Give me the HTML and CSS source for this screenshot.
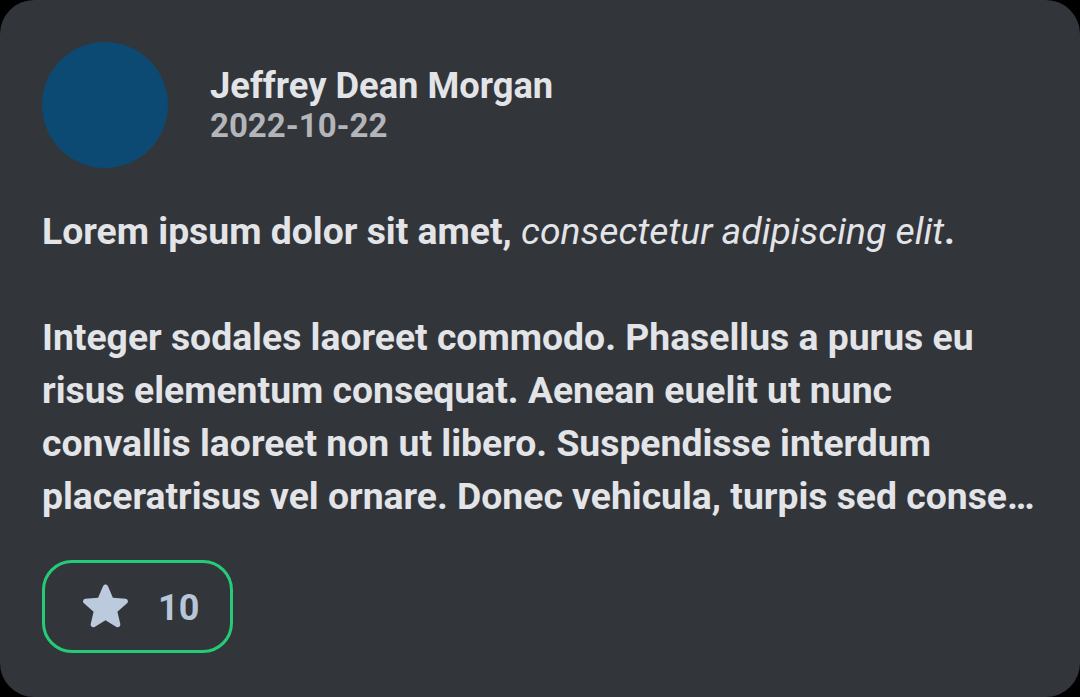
FILE: index.html
```html
<!DOCTYPE html>
<html>
<head>
<meta charset="utf-8">
<link rel="stylesheet" href="styles.css">
</head>
<body>
<div class="card">
  <div class="header">
    <div class="avatar"></div>
    <div class="meta">
      <div class="name">Jeffrey Dean Morgan</div>
      <div class="date">2022-10-22</div>
    </div>
  </div>
  <div class="body">
    <p class="para"><b>Lorem ipsum dolor sit amet,</b> <i>consectetur adipiscing elit</i>.</p>
    <p class="para">Integer sodales laoreet commodo. Phasellus a purus eu risus elementum consequat. Aenean euelit ut nunc convallis laoreet non ut libero. Suspendisse interdum</p>
    <p class="para last">placeratrisus vel ornare. Donec vehicula, turpis sed consectetur ullamcorper, ante nunc egestas quam.</p>
  </div>
  <div class="actions">
    <button class="like">
      <svg class="star" viewBox="0 0 24 24"><path fill="currentColor" d="M12 17.27l4.15 2.51c.76.46 1.69-.22 1.49-1.08l-1.1-4.72 3.67-3.18c.67-.58.31-1.68-.57-1.75l-4.83-.41-1.89-4.46c-.34-.81-1.5-.81-1.84 0L9.19 8.63l-4.83.41c-.88.07-1.24 1.17-.57 1.75l3.67 3.18-1.1 4.72c-.2.86.73 1.54 1.49 1.08L12 17.27z"/></svg>
      <span class="count">10</span>
    </button>
  </div>
</div>
</body>
</html>
```
FILE: styles.css
```css
html, body {
  margin: 0;
  padding: 0;
  background: #000;
}
body {
  width: 1080px;
  height: 697px;
  font-family: Roboto, "Noto Sans", sans-serif;
}
.card {
  box-sizing: border-box;
  width: 1080px;
  height: 697px;
  background: #323539;
  border-radius: 34px;
  padding: 42px;
  display: flex;
  flex-direction: column;
}
.header {
  display: flex;
  align-items: center;
  gap: 42px;
}
.avatar {
  width: 126px;
  height: 126px;
  border-radius: 50%;
  background: #0d4a73;
  flex: none;
}
.meta {
  display: flex;
  flex-direction: column;
  margin-top: 2px;
}
.name {
  font-size: 36.3px;
  font-weight: 700;
  color: #e3e4e8;
  line-height: 40px;
}
.date {
  font-size: 33px;
  font-weight: 700;
  color: #b3b5ba;
  line-height: 40px;
}
.body {
  margin-top: 37px;
  font-size: 37.3px;
  line-height: 53px;
  font-weight: 700;
  color: #e3e4e8;
  display: flex;
  flex-direction: column;
  gap: 53px;
}
.para {
  margin: 0;
}
.body .para.last {
  margin-top: -53px;
  white-space: nowrap;
  overflow: hidden;
  text-overflow: ellipsis;
}
.para b {
  font-weight: 700;
}
.para i {
  font-weight: 400;
}
.actions {
  margin-top: 37px;
  display: flex;
}
.like {
  box-sizing: border-box;
  height: 93px;
  width: 191px;
  border: 3px solid #25cc77;
  border-radius: 30px;
  background: transparent;
  display: flex;
  align-items: center;
  padding: 0 0 0 29px;
  gap: 21px;
  color: #bccadd;
  font-family: inherit;
  cursor: pointer;
}
.star {
  display: block;
  width: 63px;
  height: 63px;
}
.count {
  font-size: 36px;
  font-weight: 700;
  color: #b9c6d8;
  margin-top: 2px;
}
```
